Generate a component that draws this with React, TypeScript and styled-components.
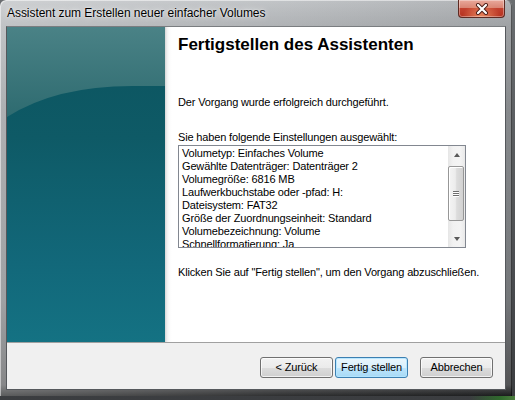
import styled, { createGlobalStyle } from 'styled-components';

const GlobalStyle = createGlobalStyle`
  html, body {
    margin: 0;
    padding: 0;
  }
  body {
    width: 515px;
    height: 400px;
    overflow: hidden;
    background: #4b4e52;
    font-family: 'Liberation Sans', Arial, sans-serif;
    color: #000;
  }
`;

const Desktop = styled.div`
  width: 515px;
  height: 400px;
  background:
    linear-gradient(to right, transparent 0, transparent 470px, #2f6a2c 500px, #4c7d3e 515px) bottom / 100% 4px no-repeat,
    linear-gradient(to bottom, #6a6d70, #3b3d40);
`;

const Window = styled.div`
  position: relative;
  width: 512px;
  height: 396px;
  box-sizing: border-box;
  padding: 0 6px 6px 6px;
  display: flex;
  flex-direction: column;
  border-radius: 6px 6px 0 0;
  background:
    linear-gradient(to right, rgba(255, 255, 255, 0.28) 0, rgba(255, 255, 255, 0.08) 55%, rgba(0, 0, 0, 0.06) 100%),
    linear-gradient(to bottom, #bcbfc2 0, #a9acaf 26px, #8f9295 110px, #7b7e81 300px, #58595b 385px, #1c1d1e 396px);
  box-shadow: inset 1px 1px 0 rgba(255, 255, 255, 0.5), inset -1px 0 0 rgba(0, 0, 0, 0.5);
`;

const TitleBar = styled.div`
  height: 26px;
  box-sizing: border-box;
  padding: 6px 0 0 1px;
  font-size: 12px;
  line-height: 14px;
  letter-spacing: -0.05px;
  white-space: nowrap;
  text-shadow: 0 0 6px rgba(255, 255, 255, 0.9), 0 0 2px rgba(255, 255, 255, 0.8);
`;

const CloseButton = styled.div`
  position: absolute;
  top: 0;
  right: 7px;
  width: 47px;
  height: 18px;
  box-sizing: border-box;
  border: 1px solid #5e2a22;
  border-top: none;
  border-radius: 0 0 4px 4px;
  background:
    radial-gradient(ellipse at 50% 100%, rgba(255, 170, 120, 0.7) 0, rgba(255, 120, 80, 0) 60%),
    linear-gradient(to bottom, #e9a99b 0, #d98574 45%, #c2412e 50%, #b5321f 100%);
  box-shadow: inset 0 0 0 1px rgba(255, 255, 255, 0.35);
  display: flex;
  align-items: center;
  justify-content: center;
`;

const Client = styled.div`
  flex: 1;
  display: flex;
  flex-direction: column;
  border: 1px solid #55585c;
  border-top-color: #7a7d80;
  background: #f0f0f0;
`;

const Body = styled.div`
  height: 315px;
  display: flex;
  border-bottom: 1px solid #a0a0a0;
`;

const Sidebar = styled.div`
  position: relative;
  width: 158px;
  overflow: hidden;
  background: linear-gradient(to bottom, #0c545f 0, #0e5a66 35%, #12687a 75%, #147283 100%);
`;

const Gloss = styled.svg`
  position: absolute;
  top: 0;
  left: 0;
`;

const Content = styled.div`
  flex: 1;
  box-sizing: border-box;
  padding: 8px 12px 0 13px;
  background: linear-gradient(to right, #d6d6d6 0, #f0f0f0 2px, #fbfbfb 4px, #fff 7px);
`;

const Heading = styled.h1`
  margin: 0;
  font-size: 17px;
  line-height: 20px;
  font-weight: bold;
`;

const Text = styled.p<{ $gap: number }>`
  margin: ${p => p.$gap}px 0 0 0;
  font-size: 11px;
  line-height: 13px;
  letter-spacing: -0.15px;
  white-space: nowrap;
`;

const ListBox = styled.div`
  margin-top: 1px;
  width: 288px;
  height: 103px;
  box-sizing: border-box;
  border: 1px solid #828790;
  background: #fff;
  display: flex;
`;

const Lines = styled.div`
  flex: 1;
  padding: 1px 0 0 3px;
  overflow: hidden;
`;

const Line = styled.div`
  font-size: 11px;
  line-height: 13px;
  letter-spacing: -0.15px;
  white-space: nowrap;
`;

const ScrollBar = styled.div`
  width: 17px;
  display: flex;
  flex-direction: column;
  background: linear-gradient(to right, #e6e6e6 0, #f2f2f2 30%, #f4f4f4 70%, #e9e9e9 100%);
`;

const ArrowButton = styled.div`
  height: 17px;
  display: flex;
  align-items: center;
  justify-content: center;
`;

const Arrow = styled.div<{ $down?: boolean }>`
  width: 0;
  height: 0;
  border-left: 3.5px solid transparent;
  border-right: 3.5px solid transparent;
  ${p => (p.$down ? 'border-top: 4px solid #5a5a5a;' : 'border-bottom: 4px solid #5a5a5a;')}
`;

const Thumb = styled.div`
  margin: 3px 1px 0 0;
  height: 55px;
  box-sizing: border-box;
  border: 1px solid #979797;
  border-radius: 2px;
  background: linear-gradient(to right, #f4f4f4 0, #ececec 45%, #dcdcdc 55%, #d2d2d2 100%);
  box-shadow: inset 1px 1px 0 #fff;
  display: flex;
  flex-direction: column;
  align-items: center;
  justify-content: center;
  gap: 1px;
`;

const Grip = styled.div`
  width: 6px;
  height: 1px;
  background: #6e6e6e;
  box-shadow: 0 1px 0 #fff;
`;

const Spacer = styled.div`
  flex: 1;
`;

const Footer = styled.div`
  flex: 1;
  display: flex;
  justify-content: flex-end;
  align-items: flex-start;
  padding: 14px 12px 0 0;
  gap: 2px;
`;

const Button = styled.div<{ $primary?: boolean; $gap?: number }>`
  width: 73px;
  height: 21px;
  box-sizing: border-box;
  margin-left: ${p => p.$gap ?? 0}px;
  border: 1px solid ${p => (p.$primary ? '#3c7fb1' : '#707070')};
  border-radius: 3px;
  font-size: 11px;
  line-height: 19px;
  letter-spacing: -0.15px;
  text-align: center;
  white-space: nowrap;
  background: ${p =>
    p.$primary
      ? 'linear-gradient(to bottom, #eaf6fd 0, #d9f0fc 50%, #bee6fd 50%, #a7d9f5 100%)'
      : 'linear-gradient(to bottom, #f2f2f2 0, #ebebeb 50%, #dddddd 50%, #cfcfcf 100%)'};
  box-shadow: inset 0 0 0 1px ${p => (p.$primary ? 'rgba(180, 230, 255, 0.9)' : 'rgba(255, 255, 255, 0.7)')};
`;

const settings = [
  'Volumetyp: Einfaches Volume',
  'Gewählte Datenträger: Datenträger 2',
  'Volumegröße: 6816 MB',
  'Laufwerkbuchstabe oder -pfad: H:',
  'Dateisystem: FAT32',
  'Größe der Zuordnungseinheit: Standard',
  'Volumebezeichnung: Volume',
  'Schnellformatierung: Ja',
];

export default function App() {
  return (
    <Desktop>
      <GlobalStyle />
      <Window>
        <TitleBar>Assistent zum Erstellen neuer einfacher Volumes</TitleBar>
        <CloseButton>
          <svg width="14" height="12" viewBox="0 0 14 12">
            <path d="M3 2 L11 10 M11 2 L3 10" stroke="#4a1c16" strokeWidth="4" strokeLinecap="round" />
            <path d="M3 2 L11 10 M11 2 L3 10" stroke="#fff" strokeWidth="2.2" strokeLinecap="round" />
          </svg>
        </CloseButton>
        <Client>
          <Body>
            <Sidebar>
              <Gloss width="158" height="120" viewBox="0 0 158 120">
                <defs>
                  <linearGradient id="gloss" x1="0" y1="0" x2="0" y2="1">
                    <stop offset="0" stopColor="#4a8286" />
                    <stop offset="1" stopColor="#2e6b70" />
                  </linearGradient>
                </defs>
                <path d="M0 0 H158 V59 L130 59 Q50 58 0 90 Z" fill="url(#gloss)" />
              </Gloss>
            </Sidebar>
            <Content>
              <Heading>Fertigstellen des Assistenten</Heading>
              <Text $gap={41}>Der Vorgang wurde erfolgreich durchgeführt.</Text>
              <Text $gap={22}>Sie haben folgende Einstellungen ausgewählt:</Text>
              <ListBox>
                <Lines>
                  {settings.map(s => (
                    <Line key={s}>{s}</Line>
                  ))}
                </Lines>
                <ScrollBar>
                  <ArrowButton>
                    <Arrow />
                  </ArrowButton>
                  <Thumb>
                    <Grip />
                    <Grip />
                    <Grip />
                  </Thumb>
                  <Spacer />
                  <ArrowButton>
                    <Arrow $down />
                  </ArrowButton>
                </ScrollBar>
              </ListBox>
              <Text $gap={18}>Klicken Sie auf "Fertig stellen", um den Vorgang abzuschließen.</Text>
            </Content>
          </Body>
          <Footer>
            <Button>&lt; Zurück</Button>
            <Button $primary>Fertig stellen</Button>
            <Button $gap={10}>Abbrechen</Button>
          </Footer>
        </Client>
      </Window>
    </Desktop>
  );
}
